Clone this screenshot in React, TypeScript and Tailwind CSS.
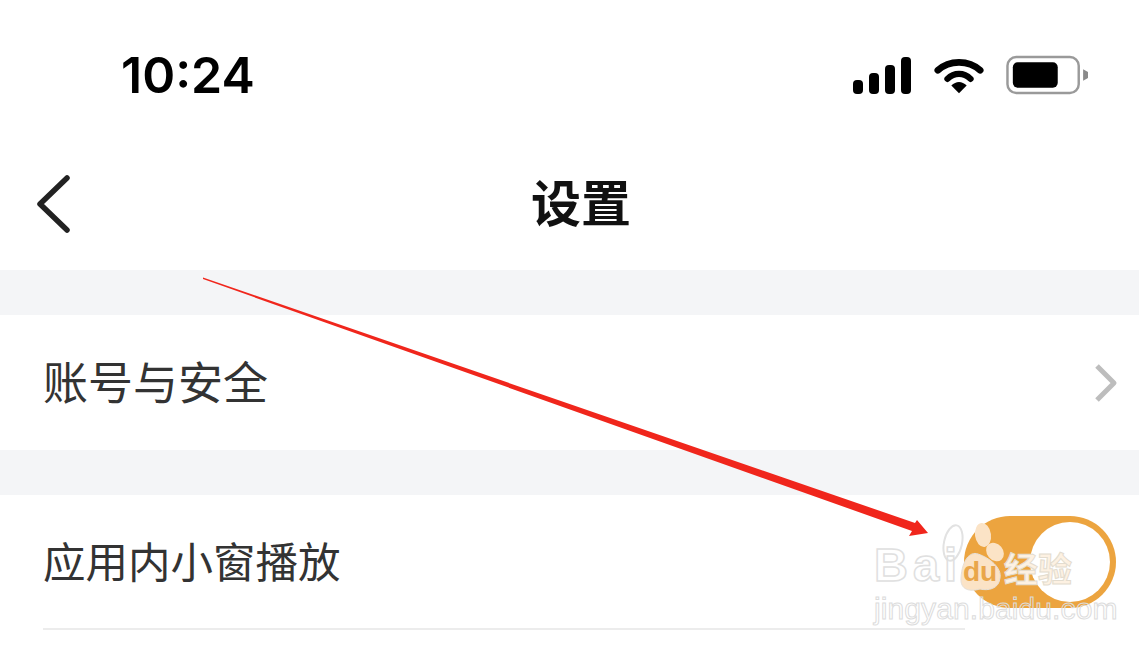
import React from "react";

const cjk = "font-['Noto_Sans_CJK_SC','Noto_Sans_CJK_JP',sans-serif]";

function StatusIcons() {
  return (
    <div className="flex items-center gap-[22px]">
      <svg width="60" height="38" viewBox="0 0 60 38" className="block">
        <rect x="1" y="24" width="10" height="14" rx="4" fill="#000" />
        <rect x="17" y="17" width="10" height="21" rx="4" fill="#000" />
        <rect x="33" y="9" width="10" height="29" rx="4" fill="#000" />
        <rect x="49" y="1" width="10" height="37" rx="4" fill="#000" />
      </svg>
      <svg width="50" height="38" viewBox="0 0 52 38" className="block">
        <path d="M4 14 C16 3 36 3 48 14" fill="none" stroke="#000" strokeWidth="7" strokeLinecap="round" />
        <path d="M14 23 C21 16 31 16 38 23" fill="none" stroke="#000" strokeWidth="6.5" strokeLinecap="round" />
        <path d="M18 30 C23 25 29 25 34 30 L26 38 Z" fill="#000" />
      </svg>
      <svg width="82" height="40" viewBox="0 0 84 40" className="block">
        <rect x="1.5" y="1.5" width="73" height="37" rx="9" fill="none" stroke="#9a9a9a" strokeWidth="2.5" />
        <rect x="7" y="7" width="46" height="26" rx="5" fill="#000" />
        <path d="M79 14 L84 17 V23 L79 26 Z" fill="#8a8a8a" />
      </svg>
    </div>
  );
}

function Watermark() {
  return (
    <div className="absolute left-[874px] top-[520px] w-[210px] h-[105px] pointer-events-none">
      <svg width="100" height="75" viewBox="0 0 100 75" className="absolute left-[68px] top-0">
        <ellipse cx="11" cy="23" rx="9" ry="18" transform="rotate(12 11 23)" fill="#ffffff" fillOpacity="0.85" stroke="#e2e2e2" strokeWidth="2" />
        <ellipse cx="41" cy="15" rx="8" ry="12" transform="rotate(-8 41 15)" fill="#fbe3c6" />
        <ellipse cx="53" cy="32" rx="8" ry="10" transform="rotate(-40 53 32)" fill="#fbe3c6" />
        <path d="M19 58 C20 40 28 31 36 34 C48 38 60 48 58 58 C57 69 46 71 38 69 C28 72 18 70 19 58 Z" fill="#fbe3c6" stroke="#e6e0d8" strokeWidth="1" />
      </svg>
      <span className="absolute left-0 top-[22px] font-['Liberation_Sans',sans-serif] text-[47px] leading-[46px] font-bold tracking-[5px] text-transparent [-webkit-text-stroke:1.5px_#e0e0e0]">
        Bai
      </span>
      <span className="absolute left-[89px] top-[38px] font-['Liberation_Sans',sans-serif] text-[28px] leading-[28px] font-bold text-[#e9a64a]">
        du
      </span>
      <span className={`absolute left-[130px] top-[29px] ${cjk} text-[34px] leading-[38px] font-bold text-[#fdf1e2] [-webkit-text-stroke:1px_#e3dccf]`}>
        经验
      </span>
      <span className="absolute left-0 top-[73px] font-['Liberation_Sans',sans-serif] text-[30px] leading-[32px] tracking-[0.1px] text-transparent [-webkit-text-stroke:1px_#dcdcdc]">
        jingyan.baidu.com
      </span>
    </div>
  );
}

export default function App() {
  return (
    <div className="relative w-[1139px] h-[645px] overflow-hidden bg-white flex flex-col">
      <div className="h-[140px] pt-[10px] flex items-center justify-between pl-[121px] pr-[51px]">
        <span className="font-['Inter',sans-serif] font-semibold text-[50px] leading-none text-black">10:24</span>
        <StatusIcons />
      </div>

      <div className="h-[130px] flex items-center justify-center relative">
        <svg width="36" height="60" viewBox="0 0 36 60" className="absolute left-[36px] top-[34px]">
          <path d="M31 4 L4 30 L31 56" fill="none" stroke="#222" strokeWidth="5.5" strokeLinecap="round" strokeLinejoin="round" />
        </svg>
        <span className={`${cjk} font-bold text-[50px] leading-none text-[#111] ml-[23px] pb-[10px]`}>设置</span>
      </div>

      <div className="h-[45px] bg-[#f4f5f7]" />

      <div className="h-[135px] flex items-center justify-between pl-[43px] pr-[21px]">
        <span className={`${cjk} text-[45px] leading-none text-[#333] pb-[4px]`}>账号与安全</span>
        <svg width="24" height="40" viewBox="0 0 24 40" className="block">
          <path d="M3 3 L20 20 L3 37" fill="none" stroke="#bdbdbd" strokeWidth="5" strokeLinejoin="round" />
        </svg>
      </div>

      <div className="h-[45px] bg-[#f4f5f7]" />

      <div className="pl-[43px]">
        <div className="h-[135px] flex items-center justify-between border-b-2 border-[#ececec] w-[922px]">
          <span className={`${cjk} text-[42.5px] leading-none text-[#333] pb-[2px]`}>应用内小窗播放</span>
        </div>
      </div>

      <div className="absolute left-[964px] top-[516px] w-[152px] h-[92px] rounded-full bg-[#eca43f] flex items-center justify-end pr-[6px]">
        <div className="w-[80px] h-[80px] rounded-full bg-white" />
      </div>

      <Watermark />

      <svg width="1139" height="645" viewBox="0 0 1139 645" className="absolute left-0 top-0 pointer-events-none">
        <path d="M203 277.5 L915 523 L917 520 L928 533 L909 536 L912 531 L203 279 Z" fill="#f0261c" />
      </svg>
    </div>
  );
}
